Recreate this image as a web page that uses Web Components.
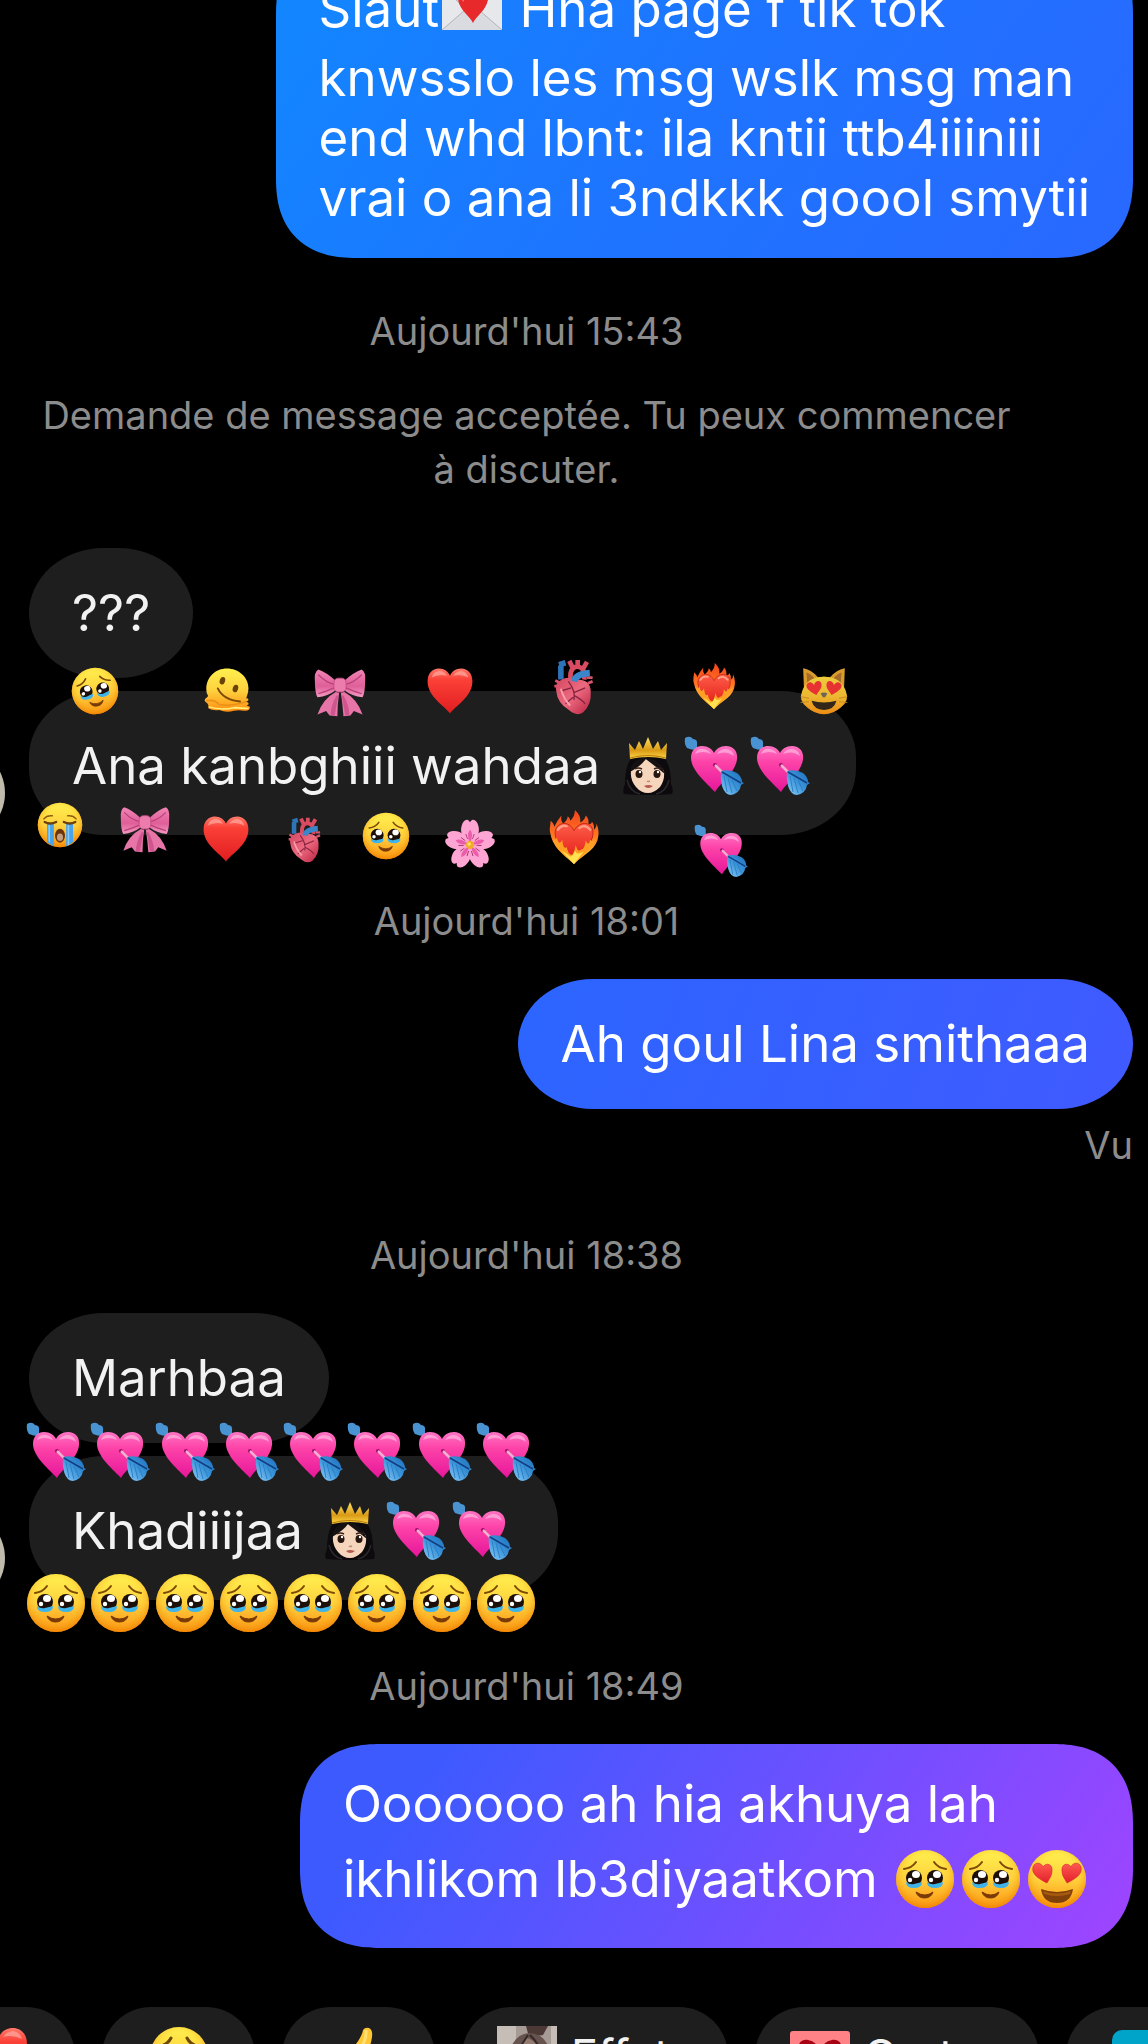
<!DOCTYPE html>
<html lang="fr">
<head>
<meta charset="utf-8">
<meta name="viewport" content="width=device-width, initial-scale=1">
<title>Messages</title>
<style>
    body {
        margin: 0;
        background: #000;
        color: #f2f2f2;
        font-family: Inter, Roboto, "Liberation Sans", sans-serif;
    }
</style>
</head>
<body>
<chat-screen>
    <chat-message side="out" tone="sky">Slaut<chat-emoji name="letter"></chat-emoji> Hna page f tik tok<br>knwsslo les msg wslk msg man<br>end whd lbnt: ila kntii ttb4iiiniii<br>vrai o ana li 3ndkkk goool smytii</chat-message>
    <chat-note kind="first">Aujourd'hui 15:43</chat-note>
    <chat-note kind="notice">Demande de message acceptée. Tu peux commencer à discuter.</chat-note>
    <chat-message>???</chat-message>
    <chat-message avatar>Ana kanbghiii wahdaa <chat-emoji name="princess"></chat-emoji><chat-emoji name="arrow"></chat-emoji><chat-emoji name="arrow"></chat-emoji>
        <chat-emoji slot="over" name="tears" style="--size: 48px; left: 42px; top: -24px; rotate: -10deg"></chat-emoji>
        <chat-emoji slot="over" name="melting" style="--size: 46px; left: 175px; top: -24px"></chat-emoji>
        <chat-emoji slot="over" name="bow" style="--size: 52px; left: 285px; top: -25px"></chat-emoji>
        <chat-emoji slot="over" name="heart" style="--size: 48px; left: 397px; top: -24px"></chat-emoji>
        <chat-emoji slot="over" name="organ" style="--size: 56px; left: 516px; top: -32px"></chat-emoji>
        <chat-emoji slot="over" name="fire" style="--size: 46px; left: 662px; top: -28px"></chat-emoji>
        <chat-emoji slot="over" name="cat" style="--size: 50px; left: 770px; top: -26px"></chat-emoji>
        <chat-emoji slot="over" name="sob" style="--size: 46px; left: 8px; top: 111px"></chat-emoji>
        <chat-emoji slot="over" name="bow" style="--size: 50px; left: 91px; top: 113px"></chat-emoji>
        <chat-emoji slot="over" name="heart" style="--size: 48px; left: 173px; top: 124px"></chat-emoji>
        <chat-emoji slot="over" name="organ" style="--size: 46px; left: 252px; top: 126px"></chat-emoji>
        <chat-emoji slot="over" name="tears" style="--size: 48px; left: 333px; top: 121px"></chat-emoji>
        <chat-emoji slot="over" name="blossom" style="--size: 50px; left: 416px; top: 128px"></chat-emoji>
        <chat-emoji slot="over" name="fire" style="--size: 54px; left: 518px; top: 119px"></chat-emoji>
        <chat-emoji slot="over" name="arrow" style="--size: 54px; left: 665px; top: 133px"></chat-emoji>
    </chat-message>
    <chat-note>Aujourd'hui 18:01</chat-note>
    <chat-message side="out" tone="blue">Ah goul Lina smithaaa</chat-message>
    <chat-note kind="seen">Vu</chat-note>
    <chat-note>Aujourd'hui 18:38</chat-note>
    <chat-message>Marhbaa</chat-message>
    <chat-message avatar>Khadiiijaa <chat-emoji name="princess"></chat-emoji><chat-emoji name="arrow"></chat-emoji><chat-emoji name="arrow"></chat-emoji>
        <emoji-strip slot="over" name="arrow" count="8"></emoji-strip>
        <emoji-strip slot="over" name="tears" count="8" edge="bottom"></emoji-strip>
    </chat-message>
    <chat-note>Aujourd'hui 18:49</chat-note>
    <chat-message side="out" tone="violet">Ooooooo ah hia akhuya lah<br>ikhlikom lb3diyaatkom <chat-emoji name="tears"></chat-emoji><chat-emoji name="tears"></chat-emoji><chat-emoji name="love"></chat-emoji></chat-message>

    <quick-pill slot="quick" icon="heart" label="Cœur"></quick-pill>
    <quick-pill slot="quick" icon="sad" label="Triste"></quick-pill>
    <quick-pill slot="quick" icon="thumb" label="J'aime"></quick-pill>
    <quick-pill slot="quick" icon="photo">Effets</quick-pill>
    <quick-pill slot="quick" icon="card">Cartes</quick-pill>
    <quick-pill slot="quick" icon="tile" label="Plus"></quick-pill>
</chat-screen>

<script>
    // Shared paint for the yellow faces
    const face = `
        <defs>
            <linearGradient id="skin" x1="0" y1="0" x2="0" y2="1">
                <stop offset="0" stop-color="#fff04e"/><stop offset=".5" stop-color="#ffd23e"/><stop offset="1" stop-color="#ff8e12"/>
            </linearGradient>
            <radialGradient id="rim" cx=".5" cy=".42" r=".58">
                <stop offset=".55" stop-color="#ffd83c" stop-opacity="0"/><stop offset="1" stop-color="#f08400" stop-opacity=".85"/>
            </radialGradient>
            <linearGradient id="love" x1="0" y1="0" x2="0" y2="1">
                <stop offset="0" stop-color="#ff5a50"/><stop offset="1" stop-color="#e3202c"/>
            </linearGradient>
        </defs>`;
    const disc = `${face}<circle cx="30" cy="30" r="29" fill="url(#skin)"/><circle cx="30" cy="30" r="29" fill="url(#rim)"/>`;

    const wetEye = (x) => `
        <circle cx="${x}" cy="29" r="8" fill="#1c0f0a"/>
        <path d="M${x - 8} 33q4 3 8 2t8-2q0 6-8 6t-8-6z" fill="#3fb4ea"/>
        <ellipse cx="${x + 2}" cy="25.500" rx="4" ry="3.500" fill="#fff"/>
        <circle cx="${x - 4}" cy="31" r="2.200" fill="#fff"/>`;

    const heartPath = 'M30 58C24 49 2 37 2 18C2 8 8 2 16 2C23 2 28 6 30 11C32 6 37 2 44 2C52 2 58 8 58 18C58 37 36 49 30 58Z';

    const flame = `
        <defs>
            <linearGradient id="fire" x1="0" y1="0" x2="0" y2="1">
                <stop offset="0" stop-color="#f4421d"/><stop offset=".5" stop-color="#ff7a21"/><stop offset="1" stop-color="#ffe14a"/>
            </linearGradient>
            <linearGradient id="hot" x1="0" y1="0" x2="0" y2="1">
                <stop offset="0" stop-color="#ff5c4a"/><stop offset="1" stop-color="#e32118"/>
            </linearGradient>
        </defs>`;

    const drawings = {
        tears: `${disc}${wetEye(19)}${wetEye(40)}
            <path d="M9 20Q17 19 21 13M51 20Q43 19 39 13" fill="none" stroke="#7d4a05" stroke-width="2" stroke-linecap="round"/>
            <path d="M21 43Q30 49 38 43Q36 49 29.500 49Q23 49 21 43Z" fill="#7a3a06" stroke="#7a3a06" stroke-linejoin="round"/>`,

        love: `${disc}
            <g fill="url(#love)" stroke="#d5222b" stroke-width=".6">
                <path d="M20 34C12 30 4 25 6 18C8 12 15 14 16 18C19 13 26 15 25 22C25 27 22 30 20 34Z"/>
                <path d="M40 34C48 30 56 25 54 18C52 12 45 14 44 18C41 13 34 15 35 22C35 27 38 30 40 34Z"/>
            </g>
            <path d="M14 40Q30 46 46 40Q44 54 30 54Q16 54 14 40Z" fill="#80400a"/>
            <path d="M16 42Q30 47 44 42L43 45Q30 49 17 45Z" fill="#a75a10"/>`,

        sob: `${disc}
            <path d="M13 28h9v30q-5-2-9-6zM38 28h9v24q-4 4-9 6z" fill="#4aa4ec"/>
            <path d="M15 30h2v23l-2-2zM40 30h2v26h-2z" fill="#87cdfb"/>
            <path d="M10 26Q17 30 25 26M35 26Q43 30 50 26" fill="none" stroke="#70420b" stroke-width="3" stroke-linecap="round"/>
            <path d="M9 22Q13 17 20 18M51 22Q47 17 40 18" fill="none" stroke="#94600e" stroke-width="2" stroke-linecap="round"/>
            <ellipse cx="30" cy="44" rx="6.500" ry="9" fill="#6e3309"/><ellipse cx="30" cy="46" rx="4" ry="5" fill="#c2a083"/>`,

        sad: `${disc}
            <path d="M12 20Q19 18 22 12M48 20Q41 18 38 12" fill="none" stroke="#6e470c" stroke-width="3" stroke-linecap="round"/>
            <circle cx="20" cy="30" r="5" fill="#3c230a"/><circle cx="40" cy="30" r="5" fill="#3c230a"/>`,

        melting: `${face}
            <path d="M3 29C3 13 15 2 30 2S58 13 58 28C58 33 56 38 55 41Q58 40 58 43Q57 45 54 45Q59 46 58 49Q53 50 60 52Q60 58 52 57Q45 56 39 57Q29 60 20 56Q10 57 6 54Q7 50 4 47Q-1 44 2 41Q6 39 5 37Q3 34 3 29Z" fill="url(#skin)"/>
            <path d="M3 44Q14 42 20 49Q35 52 55 45" fill="none" stroke="#e99118" stroke-width="2"/>
            <path d="M6 52Q22 57 40 53Q50 54 58 54" fill="none" stroke="#fff07c" stroke-width="2"/>
            <ellipse cx="24" cy="18" rx="3.500" ry="5" fill="#694208" transform="rotate(16 24 18)"/>
            <ellipse cx="41" cy="28" rx="3.500" ry="5" fill="#694208" transform="rotate(16 41 28)"/>
            <path d="M18 28Q25 43 47 45" fill="none" stroke="#7b4908" stroke-width="2.500" stroke-linecap="round"/>`,

        heart: `
            <defs>
                <linearGradient id="red" x1="0" y1="0" x2="0" y2="1">
                    <stop offset="0" stop-color="#ff7a6b"/><stop offset=".25" stop-color="#fb4037"/><stop offset="1" stop-color="#e01d20"/>
                </linearGradient>
            </defs>
            <path d="${heartPath}" fill="url(#red)"/>
            <path d="M7 13Q10 5 17 5Q24 6 26 11Q17 8 7 13ZM34 11Q37 6 44 5Q51 6 53 13Q43 8 34 11Z" fill="#ffaaa0" opacity=".7"/>`,

        arrow: `
            <defs>
                <linearGradient id="pink" x1="0" y1="0" x2="0" y2="1">
                    <stop offset="0" stop-color="#ff73c3"/><stop offset=".35" stop-color="#fd43a8"/><stop offset="1" stop-color="#e6169a"/>
                </linearGradient>
                <linearGradient id="vane" x1="1" y1="0" x2="0" y2="1">
                    <stop offset="0" stop-color="#1769b5"/><stop offset=".5" stop-color="#3a93d8"/><stop offset="1" stop-color="#8ed0fa"/>
                </linearGradient>
            </defs>
            <path d="M9 9L16 16" stroke="#9cacc8" stroke-width="2.500"/>
            <path d="M1 2Q6-1 9 3Q14 3 13 9L13 14Q7 14 3 12Q0 8 1 2Z" fill="#4a93d2"/>
            <path d="M31 56C25 49 7 35 7 22C7 14 12 10 18 10C24 10 28 13 30 17C32 13 36 10 42 10C49 10 54 15 53 23C52 36 36 47 31 56Z" fill="url(#pink)"/>
            <path d="M11 18Q13 12 20 13Q25 14 27 18Q19 14 11 18ZM33 18Q36 13 42 13Q49 14 50 20Q42 14 33 18Z" fill="#ffb6df" opacity=".7"/>
            <circle cx="31" cy="29" r="2" fill="#a00b6c"/>
            <path d="M31 29L44 42" stroke="#efb1cf" stroke-width="2.500"/>
            <path d="M37 35Q46 33 53 37Q58 41 58 46L60 47L57 49Q56 57 47 59Q41 59 38 50Q36 42 37 35Z" fill="url(#vane)"/>
            <path d="M38 36L57 47" stroke="#123f83" stroke-width="1.500"/>
            <path d="M40 40L43 56M44 42L48 57M48 44L53 55" stroke="#2d7fc4" stroke-width="1"/>`,

        princess: `
            <defs>
                <linearGradient id="gold" x1="0" y1="0" x2="0" y2="1">
                    <stop offset="0" stop-color="#ffe160"/><stop offset=".6" stop-color="#d99a16"/><stop offset="1" stop-color="#ffd848"/>
                </linearGradient>
            </defs>
            <path d="M12 24Q20 18 30 18T48 24Q53 32 53 48Q56 54 54 58Q30 60 6 58Q4 54 7 48Q7 32 12 24Z" fill="#0c0a0c"/>
            <path d="M9 44Q12 56 22 58M51 44Q48 56 38 58" fill="none" stroke="#2c292c" stroke-width="1.500"/>
            <path d="M13 35Q14 25 27 22Q40 24 46 35Q47 44 42 51Q36 57 30 57Q23 57 18 51Q12 44 13 35Z" fill="#f6d5bd"/>
            <path d="M12 36Q14 22 29 21Q26 28 12 36ZM25 21Q41 21 47 38Q37 30 25 21Z" fill="#151012"/>
            <path d="M17 33Q20 31 24 33M36 33Q40 31 43 33" fill="none" stroke="#38231e" stroke-width="1.500"/>
            <ellipse cx="21" cy="38" rx="3.500" ry="4" fill="#27160f"/><ellipse cx="39" cy="38" rx="3.500" ry="4" fill="#27160f"/>
            <circle cx="22" cy="36" r="1.200" fill="#fff"/><circle cx="40" cy="36" r="1.200" fill="#fff"/>
            <path d="M29 45Q30 46 32 45" fill="none" stroke="#c08e74" stroke-width="1.500"/>
            <path d="M26 50Q30 48 35 50Q30 54 26 50Z" fill="#b35b50"/>
            <path d="M12 23L11 7L17 14L21 5L25 13L30 1L35 13L40 5L43 14L49 7L48 23Q30 19 12 23Z" fill="url(#gold)"/>
            <path d="M12 22Q30 17 48 22" fill="none" stroke="#b77908" stroke-width="1"/>`,

        letter: `
            <path d="M0 9h60v42H0z" fill="#d9dbe0"/>
            <path d="M0 9L30 34L60 9V51L38 32L30 38L22 32L0 51Z" fill="#e6e8eb"/>
            <path d="M0 51L23 31M60 51L37 31M0 9L28 33M60 9L32 33" fill="none" stroke="#b2b4ba" stroke-width="1"/>
            <path d="M31 44C28 37 16 30 16 19C16 12 20 8 24 8C28 8 30 11 31 13C32 11 34 8 38 8C42 8 46 12 46 19C46 30 34 37 31 44Z" fill="#e8292c"/>
            <path d="M19 18Q20 11 26 12Q25 17 21 23Z" fill="#ff776d"/>`,

        bow: `
            <defs>
                <linearGradient id="silk" x1="0" y1="0" x2="0" y2="1">
                    <stop offset="0" stop-color="#f084b4"/><stop offset=".6" stop-color="#df5f99"/><stop offset="1" stop-color="#f39ac2"/>
                </linearGradient>
            </defs>
            <path d="M25 30Q10 38 4 56L14 52L18 57L27 58Q27 44 29 31Z" fill="#e775a8"/>
            <path d="M35 30Q50 38 56 56L46 52L42 57L34 58Q33 44 31 31Z" fill="#e775a8"/>
            <path d="M26 34Q20 44 19 56L24 57Q26 44 28 34ZM34 34Q40 44 41 56L36 57Q34 44 32 34Z" fill="#cf558e"/>
            <path d="M25 17Q14 7 5 4Q0 7 1 17Q1 31 4 36Q16 35 25 28Z" fill="url(#silk)"/>
            <path d="M35 17Q46 7 55 4Q60 7 59 17Q59 31 56 36Q44 35 35 28Z" fill="url(#silk)"/>
            <path d="M5 10Q15 20 24 21M5 32Q15 29 24 25M55 10Q45 20 36 21M55 32Q45 29 36 25" fill="none" stroke="#ba4278" stroke-width="1.500"/>
            <rect x="23" y="14" width="14" height="16" rx="5" fill="#ec7cac" stroke="#c24b83"/>`,

        organ: `
            <defs>
                <linearGradient id="flesh" x1="0" y1="0" x2="1" y2="1">
                    <stop offset="0" stop-color="#d24860"/><stop offset=".5" stop-color="#ec6a80"/><stop offset="1" stop-color="#b9213f"/>
                </linearGradient>
            </defs>
            <path d="M17 22V7M15 6L22 4" fill="none" stroke="#2e74b9" stroke-width="6"/>
            <path d="M28 25Q25 10 34 8Q44 9 42 22M30 10L26 2M35 8L35 1M41 10L45 3" fill="none" stroke="#d94b61" stroke-width="5"/>
            <path d="M11 23L17 26M10 29H17M45 20H51M46 26L51 24" stroke="#d7556c" stroke-width="3"/>
            <path d="M13 26Q22 17 34 22Q49 22 49 35Q50 49 41 57Q34 62 26 55Q13 47 12 34Q11 29 13 26Z" fill="url(#flesh)"/>
            <path d="M31 24Q33 16 48 15" fill="none" stroke="#3987ca" stroke-width="7"/>
            <path d="M25 24Q33 34 31 44M31 36L43 31M31 39Q39 43 43 48M28 31L18 34M30 41L22 48" fill="none" stroke="#8b2441" stroke-width="1.500"/>
            <path d="M17 32Q20 43 27 50" fill="none" stroke="#fca0ad" stroke-width="2"/>`,

        fire: `${flame}
            <path d="M30 60C23 52 6 42 4 27C2 21 4 17 4 12Q8 15 8 19Q11 12 16 6Q15 12 18 15Q23 11 23 7Q26 9 26 12Q31 7 31 0Q38 6 37 14Q42 11 43 6Q47 10 46 15Q49 17 50 13Q53 17 52 22Q55 20 55 15Q59 24 56 34C52 46 37 52 30 60Z" fill="url(#fire)"/>
            <path d="M30 54C24 46 9 38 9 26C9 19 14 15 19 15C25 15 28 19 30 23C32 19 36 15 42 15C48 15 52 20 51 27C51 38 36 46 30 54Z" fill="url(#hot)" stroke="#bd230e" stroke-width="1"/>
            <path d="M12 22Q16 16 22 18M36 20Q42 15 48 22" fill="none" stroke="#ffa086" stroke-width="2.500" stroke-linecap="round"/>
            <path d="M30 60C23 53 8 44 6 31Q10 36 11 30Q13 41 17 33Q18 45 22 41Q23 49 28 50Q31 46 32 39Q34 48 38 44Q42 44 43 34Q46 41 48 33Q51 37 54 31C52 44 37 52 30 60Z" fill="#ffa024"/>
            <path d="M30 60Q22 52 16 45Q22 48 26 52Q30 50 31 45Q33 51 41 46Q35 53 30 60Z" fill="#ffe44f"/>`,

        cat: `${face}
            <path d="M6 29L5 4Q14 5 23 15Q30 13 37 15Q46 5 55 4L54 29Z" fill="#d89b2c"/>
            <path d="M9 9Q15 11 19 17L10 23ZM51 9Q45 11 41 17L50 23Z" fill="#a56b28"/>
            <path d="M30 14Q50 14 56 31Q61 43 50 51Q41 59 30 59Q19 59 10 51Q-1 43 4 31Q10 14 30 14Z" fill="url(#skin)"/>
            <path d="M30 14Q50 14 56 31Q61 43 50 51Q41 59 30 59Q19 59 10 51Q-1 43 4 31Q10 14 30 14Z" fill="#c98a1d" opacity=".35"/>
            <path d="M21 36C15 33 8 29 9 24C11 19 16 20 18 24C20 17 28 18 27 25C27 29 23 32 21 36ZM39 36C45 33 52 29 51 24C49 19 44 20 42 24C40 17 32 18 33 25C33 29 37 32 39 36Z" fill="#e63232"/>
            <path d="M26 34Q30 32 34 34Q32 39 30 39Q28 39 26 34Z" fill="#6f655b"/>
            <path d="M15 43Q30 47 45 43Q42 54 30 54Q18 54 15 43Z" fill="#332719"/>
            <path d="M2 38L12 40M2 45L12 44M58 38L48 40M58 45L48 44" stroke="#be8623"/>`,

        blossom: `
            <defs>
                <g id="petal">
                    <path d="M30 31C20 23 18 15 20 8Q22 1 27 1Q29 2 30 4Q31 2 33 1Q38 1 40 8C42 15 40 23 30 31Z" fill="#ffa5d4"/>
                    <path d="M30 29Q25 18 30 13Q35 18 30 29Z" fill="#eb5daa"/>
                    <path d="M27 24L25 18M33 24L35 18" stroke="#a52d6a"/>
                </g>
            </defs>
            ${[0, 72, 144, 216, 288].map((turn) => `<use href="#petal" transform="rotate(${turn} 30 31)"/>`).join('')}
            <circle cx="30" cy="31" r="5" fill="#f1ad29"/><circle cx="29" cy="30" r="2" fill="#ffe36b"/>`,

        thumb: `
            <path d="M13 58V34Q22 28 27 18Q33 10 34 4Q36 1 40 2Q44 4 43 11Q42 19 38 26H53Q59 30 55 36Q60 41 54 46Q55 52 49 58Z" fill="#ffc633"/>
            <path d="M37 4Q38 14 31 23" fill="none" stroke="#ffe070" stroke-width="3"/>`,

        photo: `
            <path d="M0 0h60v60H0z" fill="#a79b95"/>
            <path d="M0 0h19v60H0zM54 0h6v60h-6z" fill="#c6bdb6"/>
            <path d="M29 0h22L46 9L32 11Z" fill="#4c3835"/>
            <path d="M12 27Q17 8 32 7Q47 7 53 24L58 60H10Z" fill="#66534d"/>
            <path d="M18 28Q24 16 30 12Q39 14 44 28V60H18Z" fill="#947b72"/>
            <path d="M31 9Q24 20 18 28M33 9Q42 18 47 30" fill="none" stroke="#34282a" stroke-width="2"/>`,

        card: `
            <rect width="60" height="50" y="5" rx="3" fill="#ff8286"/>
            <path d="M30 50C26 42 8 34 8 23C8 16 13 13 18 14Q25 15 30 23Q35 15 42 14C47 13 52 16 52 23C52 34 34 42 30 50Z" fill="#a70315"/>`,

        tile: `<rect width="60" height="52" y="4" rx="10" fill="#00a4c9"/>`
    };

    class ChatEmoji extends HTMLElement {
        connectedCallback() {
            this.attachShadow({ mode: 'open' });
            this.shadowRoot.innerHTML = `
                <style>
                    :host {
                        display: inline-block;
                        width: var(--size, 60px);
                        height: var(--size, 60px);
                    }

                    svg {
                        display: block;
                        width: 100%;
                        height: 100%;
                        overflow: visible;
                    }
                </style>
                <svg viewBox="0 0 60 60" aria-hidden="true">${drawings[this.getAttribute('name')]}</svg>
            `;
        }
    }

    class EmojiStrip extends HTMLElement {
        connectedCallback() {
            this.attachShadow({ mode: 'open' });
            const count = Number(this.getAttribute('count'));
            const item = `<chat-emoji name="${this.getAttribute('name')}"></chat-emoji>`;
            this.shadowRoot.innerHTML = `
                <style>
                    :host {
                        display: flex;
                        justify-content: space-between;
                        width: 510px;
                        left: -3px;
                        top: -34px;
                    }

                    :host([edge="bottom"]) {
                        top: 117px;
                    }
                </style>
                ${item.repeat(count)}
            `;
        }
    }

    class ChatMessage extends HTMLElement {
        connectedCallback() {
            this.attachShadow({ mode: 'open' });
            this.shadowRoot.innerHTML = `
                <style>
                    :host {
                        display: block;
                        position: relative;
                        align-self: flex-start;
                        margin-bottom: 13px;
                    }

                    :host([side="out"]) {
                        align-self: flex-end;
                        color: #fff;
                    }

                    .bubble {
                        display: flex;
                        align-items: center;
                        box-sizing: border-box;
                        min-height: 130px;
                        padding: 30px 43px;
                        border-radius: 76px / 66px;
                        background: #1e1e1e;
                        font-size: 51px;
                        line-height: 60px;
                        white-space: nowrap;
                    }

                    :host([tone="sky"]) .bubble {
                        background: linear-gradient(125deg, #1188ff, #1e74ff 50%, #2968ff);
                    }

                    :host([tone="blue"]) .bubble {
                        background: linear-gradient(110deg, #2c65ff, #405aff);
                    }

                    :host([tone="violet"]) .bubble {
                        background: linear-gradient(125deg, #3d5aff 15%, #6c50ff 55%, #a044ff);
                    }

                    @supports (corner-shape: superellipse(1.25)) {
                        :host([tone="sky"]) .bubble,
                        :host([tone="violet"]) .bubble {
                            border-radius: 80px;
                            corner-shape: superellipse(1.25);
                        }
                    }

                    /* Emoji make their line taller than a line of plain text */
                    .text ::slotted(chat-emoji) {
                        margin: 15px 3px 9px;
                        vertical-align: -21px;
                    }

                    slot[name="over"]::slotted(*) {
                        position: absolute;
                    }

                    .avatar {
                        display: none;
                        position: absolute;
                        left: -120px;
                        bottom: -6px;
                        width: 96px;
                        height: 96px;
                        border-radius: 50%;
                        background: #bfbcae;
                    }

                    :host([avatar]) .avatar {
                        display: block;
                    }
                </style>
                <div class="avatar"></div>
                <div class="bubble"><div class="text"><slot></slot></div></div>
                <slot name="over"></slot>
            `;
        }
    }

    class ChatNote extends HTMLElement {
        connectedCallback() {
            this.attachShadow({ mode: 'open' });
            this.shadowRoot.innerHTML = `
                <style>
                    :host {
                        display: block;
                        box-sizing: border-box;
                        padding-right: 109px;
                        margin: 46px 0 31px;
                        color: #8c8c8c;
                        font-size: 38px;
                        line-height: 54px;
                        text-align: center;
                    }

                    :host([kind="first"]) {
                        margin: 33px 0 30px;
                    }

                    :host([kind="notice"]) {
                        margin: 0 0 52px;
                    }

                    :host([kind="seen"]) {
                        margin: -4px 0 10px;
                        padding: 0;
                        text-align: right;
                    }
                </style>
                <slot></slot>
            `;
        }
    }

    class QuickPill extends HTMLElement {
        connectedCallback() {
            this.attachShadow({ mode: 'open' });
            const label = this.getAttribute('label');
            this.shadowRoot.innerHTML = `
                <style>
                    :host {
                        display: block;
                        flex: none;
                    }

                    button {
                        display: flex;
                        align-items: center;
                        justify-content: center;
                        gap: 14px;
                        box-sizing: border-box;
                        min-width: 153px;
                        height: 98px;
                        padding: 0 35px;
                        border: 0;
                        border-radius: 49px;
                        background: #1e1e1e;
                        color: inherit;
                        font: inherit;
                        font-size: 45px;
                        line-height: 54px;
                    }
                </style>
                <button type="button"${label ? ` aria-label="${label}"` : ''}>
                    <chat-emoji name="${this.getAttribute('icon')}"></chat-emoji>
                    ${label ? '' : '<span><slot></slot></span>'}
                </button>
            `;
        }
    }

    class ChatScreen extends HTMLElement {
        connectedCallback() {
            this.attachShadow({ mode: 'open' });
            this.shadowRoot.innerHTML = `
                <style>
                    :host {
                        display: grid;
                        grid-template-rows: minmax(0, 1fr) 37px;
                        height: 100vh;
                        overflow: hidden;
                    }

                    /* The thread rests at its newest message */
                    main {
                        display: flex;
                        flex-direction: column;
                        justify-content: flex-end;
                        padding: 0 15px 46px 29px;
                    }

                    footer {
                        display: flex;
                        gap: 27px;
                        margin-left: -78px;
                        overflow: hidden;
                    }
                </style>
                <main><slot></slot></main>
                <footer><slot name="quick"></slot></footer>
            `;
        }
    }

    customElements.define('chat-emoji', ChatEmoji);
    customElements.define('emoji-strip', EmojiStrip);
    customElements.define('chat-message', ChatMessage);
    customElements.define('chat-note', ChatNote);
    customElements.define('quick-pill', QuickPill);
    customElements.define('chat-screen', ChatScreen);
</script>
</body>
</html>
